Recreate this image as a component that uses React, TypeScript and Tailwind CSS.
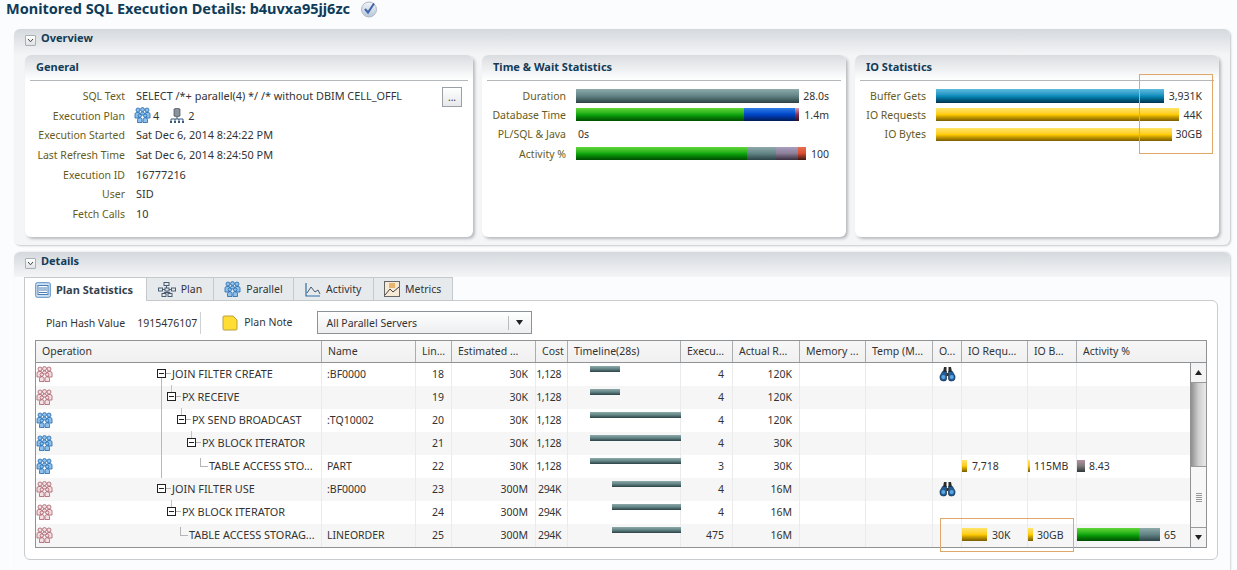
import React from "react";

const barGreen = "bg-gradient-to-b from-[#5fd83a] via-[#0fa80f] to-[#004d00]";
const barSlate = "bg-gradient-to-b from-[#8fabab] via-[#628384] to-[#2c4347]";
const barBlue = "bg-gradient-to-b from-[#2f7de8] via-[#0045c8] to-[#001a55]";
const barGold = "bg-gradient-to-b from-[#ffe566] via-[#ffcc00] to-[#7a5c00]";
const barSky = "bg-gradient-to-b from-[#5dbde0] via-[#0a8dbd] to-[#00334f]";

function People({ c, d }: { c: string; d: string }) {
  return (
    <svg width="17" height="17" viewBox="0 0 17 17" className="shrink-0">
      <g fill={c} stroke={d} strokeWidth="0.8">
        <circle cx="4" cy="3" r="2" />
        <circle cx="8.5" cy="2.6" r="2" />
        <circle cx="13" cy="3" r="2" />
        <path d="M1 11 V7 Q1 5.5 3 5.5 H5 Q6 5.5 6 7 V11 Z" />
        <path d="M11 11 V7 Q11 5.5 12 5.5 H14 Q16 5.5 16 7 V11 Z" />
        <path d="M6.5 8 V6.5 Q6.5 5 8.5 5 Q10.5 5 10.5 6.5 V8 Z" />
        <circle cx="5.8" cy="8.6" r="1.7" />
        <circle cx="11.2" cy="8.6" r="1.7" />
        <path d="M3.5 15.5 V12.5 Q3.5 10.8 5.5 10.8 H6.5 Q8 10.8 8 12.5 V15.5 Z" />
        <path d="M9 15.5 V12.5 Q9 10.8 10.5 10.8 H11.5 Q13.5 10.8 13.5 12.5 V15.5 Z" />
      </g>
    </svg>
  );
}
const BluePeople = () => <People c="#8fc0ec" d="#1f68ad" />;
const PinkPeople = () => <People c="#f3dfe1" d="#a85c68" />;

function Binoculars() {
  return (
    <svg width="17" height="16" viewBox="0 0 17 16">
      <path d="M5 1 H7.5 V6 H9.5 V1 H12 L13 6 H4 Z" fill="#2b2b2b" />
      <path d="M1 10 L3.5 5.5 H7.5 V13 Q7.5 15 4.5 15 Q1 15 1 12 Z" fill="#1d5f9e" stroke="#123" strokeWidth="0.6" />
      <path d="M16 10 L13.5 5.5 H9.5 V13 Q9.5 15 12.5 15 Q16 15 16 12 Z" fill="#1d5f9e" stroke="#123" strokeWidth="0.6" />
      <circle cx="4.3" cy="11" r="2" fill="#5ea6e0" />
      <circle cx="12.7" cy="11" r="2" fill="#5ea6e0" />
      <rect x="7.5" y="7" width="2" height="3" fill="#333" />
    </svg>
  );
}

function Toggle() {
  return (
    <span className="flex h-[11px] w-[11px] items-center justify-center border border-[#aab0b5] bg-gradient-to-b from-white to-[#dfe2e5] rounded-[1px]">
      <svg width="7" height="5" viewBox="0 0 7 5"><path d="M1 1 L3.5 3.8 L6 1" fill="none" stroke="#444" strokeWidth="1" /></svg>
    </span>
  );
}

function Minus({ stub }: { stub?: boolean }) {
  return (
    <span className="relative z-10 flex h-[9px] w-[9px] shrink-0 items-center justify-center border border-[#222] bg-white">
      <span className="h-px w-[5px] bg-[#222]" />
      {stub && <span className="absolute -top-[8px] left-[3px] h-[7px] w-px bg-[#c4c4c4]" />}
    </span>
  );
}

function Card({ title, width, children }: { title: string; width: string; children: React.ReactNode }) {
  return (
    <section className={`${width} h-[182px] shrink-0 rounded-[6px] bg-white shadow-[2px_2px_3px_#b9bcbf]`}>
      <div className="h-[25px] rounded-t-[6px] bg-gradient-to-b from-[#d9dce0] to-white pl-[11px] pt-[5px] text-[11px] font-bold leading-[14px] text-[#123c58]">
        {title}
      </div>
      <div className="mx-[5px] h-px bg-[#b4b8ba]" />
      {children}
    </section>
  );
}

const general: [string, React.ReactNode][] = [
  ["SQL Text", "SELECT /*+ parallel(4) */ /* without DBIM CELL_OFFL"],
  ["Execution Plan", (
    <span className="flex items-center">
      <span className="-ml-[2px] mr-[2px]"><BluePeople /></span>4
      <svg width="16" height="15" viewBox="0 0 16 15" className="ml-[10px] mr-[3px]">
        <path d="M5 1 Q8 -0.5 11 1 V8 Q8 9.5 5 8 Z" fill="#8a939c" stroke="#3f4a55" strokeWidth="0.7" />
        <path d="M8 9 V11 M2 13 V11 H14 V13 M6 11 V13 M10 11 V13" stroke="#3a5a7a" fill="none" />
        <path d="M1 13h2v2H1z M5 13h2v2H5z M9 13h2v2H9z M13 13h2v2h-2z" fill="#3a5a7a" />
      </svg>
      2
    </span>
  )],
  ["Execution Started", "Sat Dec 6, 2014 8:24:22 PM"],
  ["Last Refresh Time", "Sat Dec 6, 2014 8:24:50 PM"],
  ["Execution ID", "16777216"],
  ["User", "SID"],
  ["Fetch Calls", "10"],
];

function StatRow({ label, labelW, children, value, valueW, numW }: { label: string; labelW: string; children?: React.ReactNode; value: string; valueW: string; numW: string }) {
  return (
    <div className="flex h-[19.3px] items-center">
      <span className={`${labelW} shrink-0 pr-[10px] text-right text-[#665c22]`}>{label}</span>
      <div className={`${valueW} flex h-[13px] shrink-0 items-center`}>{children}</div>
      <span className={`${numW} flex shrink-0 justify-end whitespace-nowrap text-[#333]`}>{value}</span>
    </div>
  );
}

type Row = {
  pink?: boolean; indent: string; node?: boolean; stub?: boolean; op: string; name?: string; line: string; est: string; cost: string;
  bar: string; exec: string; rows: string; bino?: boolean; ioReq?: React.ReactNode; ioB?: React.ReactNode; act?: React.ReactNode;
};

const rows: Row[] = [
  { pink: true, indent: "pl-[121px]", node: true, op: "JOIN FILTER CREATE", name: ":BF0000", line: "18", est: "30K", cost: "1,128", bar: "ml-[22px] w-[30px]", exec: "4", rows: "120K", bino: true },
  { pink: true, indent: "pl-[131px]", node: true, stub: true, op: "PX RECEIVE", line: "19", est: "30K", cost: "1,128", bar: "ml-[22px] w-[30px]", exec: "4", rows: "120K" },
  { indent: "pl-[141px]", node: true, stub: true, op: "PX SEND BROADCAST", name: ":TQ10002", line: "20", est: "30K", cost: "1,128", bar: "ml-[22px] w-[91px]", exec: "4", rows: "120K" },
  { indent: "pl-[151px]", node: true, stub: true, op: "PX BLOCK ITERATOR", line: "21", est: "30K", cost: "1,128", bar: "ml-[22px] w-[91px]", exec: "4", rows: "30K" },
  {
    indent: "pl-[164px]", op: "TABLE ACCESS STO...", name: "PART", line: "22", est: "30K", cost: "1,128", bar: "ml-[22px] w-[91px]", exec: "3", rows: "30K",
    ioReq: <><span className={`h-[12px] w-[5px] ${barGold}`} /><span className="ml-[5px]">7,718</span></>,
    ioB: <><span className={`h-[12px] w-[2px] ${barGold}`} /><span className="ml-[4px]">115MB</span></>,
    act: <><span className="h-[12px] w-[8px] bg-gradient-to-b from-[#b78fa0] via-[#7d7a7c] to-[#30383a]" /><span className="ml-[4px]">8.43</span></>,
  },
  { pink: true, indent: "pl-[121px]", node: true, op: "JOIN FILTER USE", name: ":BF0000", line: "23", est: "300M", cost: "294K", bar: "ml-[44px] w-[69px]", exec: "4", rows: "16M", bino: true },
  { pink: true, indent: "pl-[131px]", node: true, stub: true, op: "PX BLOCK ITERATOR", line: "24", est: "300M", cost: "294K", bar: "ml-[44px] w-[69px]", exec: "4", rows: "16M" },
  {
    pink: true, indent: "pl-[144px]", op: "TABLE ACCESS STORAG...", name: "LINEORDER", line: "25", est: "300M", cost: "294K", bar: "ml-[44px] w-[69px]", exec: "475", rows: "16M",
    ioReq: <><span className={`h-[13px] w-[25px] ${barGold}`} /><span className="ml-[5px]">30K</span></>,
    ioB: <><span className={`h-[13px] w-[5px] ${barGold}`} /><span className="ml-[4px]">30GB</span></>,
    act: <><span className={`h-[13px] w-[62px] ${barGreen}`} /><span className={`h-[13px] w-[21px] ${barSlate}`} /><span className="ml-[4px]">65</span></>,
  },
];

const headers = ["Operation", "Name", "Lin...", "Estimated ...", "Cost", "Timeline(28s)", "Execu...", "Actual R...", "Memory ...", "Temp (M...", "O...", "IO Requ...", "IO B..."];

const cellLine = "border-r border-[#ebebeb] pb-[2px]";

export default function App() {
  return (
    <div className="relative h-[570px] w-[1237px] overflow-hidden bg-[#fbfcfd] text-[10.5px] leading-[14px] text-[#333] font-['Noto_Sans',sans-serif]">
      {/* Title */}
      <header className="flex h-[29px] items-start pl-[6px]">
        <h1 className="text-[14.5px] font-bold leading-[17px] text-[#0e3b58]">Monitored SQL Execution Details: b4uvxa95jj6zc</h1>
        <svg width="18" height="18" viewBox="0 0 18 18" className="ml-[10px]">
          <defs>
            <linearGradient id="chk" x1="0" y1="0" x2="0" y2="1">
              <stop offset="0" stopColor="#f2f5f9" />
              <stop offset="1" stopColor="#b9c6d8" />
            </linearGradient>
          </defs>
          <circle cx="9" cy="9.5" r="7.5" fill="url(#chk)" stroke="#aeb8c4" />
          <path d="M5 9 L8 12.5 L14 3.5" fill="none" stroke="#3b66a8" strokeWidth="2" />
        </svg>
      </header>

      {/* Overview */}
      <section className="ml-[14px] h-[216px] w-[1216px] rounded-[6px] bg-[#f4f5f7] shadow-[1px_1px_2px_#c5c8cb]">
        <div className="flex h-[26px] items-start rounded-t-[6px] bg-gradient-to-b from-[#d5d9dd] to-[#f4f5f7] pl-[11px] pt-[2px]">
          <span className="mt-[4px]"><Toggle /></span>
          <span className="ml-[5px] text-[11px] font-bold leading-[14px] text-[#123c58]">Overview</span>
        </div>
        <div className="flex pl-[11px] gap-[9px]">
          <Card title="General" width="w-[448px]">
            <div className="relative pt-[5px]">
              {general.map(([k, v]) => (
                <div key={k} className="flex h-[19.7px] items-center">
                  <span className="w-[100px] shrink-0 text-right text-[#665c22]">{k}</span>
                  <span className="ml-[11px] whitespace-nowrap text-[10.9px]">{v}</span>
                </div>
              ))}
              <button className="absolute right-[11px] top-[6px] flex h-[20px] w-[20px] items-center justify-center border border-[#9aa0a5] bg-gradient-to-b from-white to-[#e6e8ea] text-[10px] leading-[10px]">...</button>
            </div>
          </Card>
          <Card title="Time & Wait Statistics" width="w-[364px]">
            <div className="pt-[5px]">
              <StatRow label="Duration" labelW="w-[94px]" valueW="w-[223px]" numW="w-[30px]" value="28.0s">
                <span className={`h-[14px] w-[223px] ${barSlate}`} />
              </StatRow>
              <StatRow label="Database Time" labelW="w-[94px]" valueW="w-[223px]" numW="w-[30px]" value="1.4m">
                <span className={`h-[13px] w-[170px] ${barGreen}`} />
                <span className={`h-[13px] w-[51px] ${barBlue}`} />
                <span className="h-[13px] w-[4px] shrink-0 bg-gradient-to-b from-[#d8a0b8] via-[#8a3050] to-[#301020]" />
              </StatRow>
              <div className="flex h-[19.3px] items-center">
                <span className="w-[94px] shrink-0 pr-[10px] text-right text-[#665c22]">PL/SQL &amp; Java</span>
                <span className="ml-[2px]">0s</span>
              </div>
              <StatRow label="Activity %" labelW="w-[94px]" valueW="w-[223px]" numW="w-[30px]" value="100">
                <span className={`h-[13px] w-[171px] shrink-0 ${barGreen}`} />
                <span className={`h-[13px] w-[29px] shrink-0 ${barSlate}`} />
                <span className="h-[13px] w-[22px] shrink-0 bg-gradient-to-b from-[#a8a0c0] via-[#8a7d96] to-[#3a3040]" />
                <span className="h-[13px] w-[8px] shrink-0 bg-gradient-to-b from-[#e87050] via-[#d84a30] to-[#401810]" />
              </StatRow>
            </div>
          </Card>
          <Card title="IO Statistics" width="w-[364px]">
            <div className="pt-[5px]">
              <StatRow label="Buffer Gets" labelW="w-[81px]" valueW="w-[243px]" numW="w-[23px]" value="3,931K">
                <span className={`h-[14px] w-[228px] ${barSky}`} />
              </StatRow>
              <StatRow label="IO Requests" labelW="w-[81px]" valueW="w-[243px]" numW="w-[23px]" value="44K">
                <span className={`h-[13px] w-[243px] ${barGold}`} />
              </StatRow>
              <StatRow label="IO Bytes" labelW="w-[81px]" valueW="w-[243px]" numW="w-[23px]" value="30GB">
                <span className={`h-[13px] w-[236px] ${barGold}`} />
              </StatRow>
            </div>
          </Card>
        </div>
      </section>

      {/* Details */}
      <section className="ml-[14px] mt-[7px] h-[318px] w-[1216px] rounded-t-[6px] bg-[#fbfcfd] shadow-[1px_0_2px_#d0d3d6]">
        <div className="flex h-[25px] items-start rounded-t-[6px] bg-gradient-to-b from-[#d5d9dd] to-[#f4f5f7] pl-[11px] pt-[2px]">
          <span className="mt-[4px]"><Toggle /></span>
          <span className="ml-[5px] text-[11px] font-bold leading-[14px] text-[#123c58]">Details</span>
        </div>

        <div className="ml-[10px] w-[1194px]">
          {/* Tabs */}
          <div className="relative z-10 flex h-[24px] items-stretch">
            <div className="flex w-[123px] items-center border border-b-0 border-[#c5c9cc] bg-white pl-[10px] text-[11px] text-[#33424c] font-bold">
              <svg width="16" height="16" viewBox="0 0 16 16" className="mr-[5px]">
                <rect x="0.7" y="0.7" width="14.6" height="14.6" rx="1.5" fill="#cfe2f4" stroke="#5c8fc0" />
                <rect x="3" y="3.5" width="10" height="9" fill="#fff" stroke="#4a7fb5" />
                <path d="M4 6h8M4 8h8M4 10.5h8" stroke="#4a7fb5" />
              </svg>
              Plan Statistics
            </div>
            <div className="flex w-[67px] items-center justify-center gap-[5px] border-t border-r border-b border-[#c5c9cc] bg-[#e7eaed]">
              <svg width="18" height="15" viewBox="0 0 18 15" fill="none" stroke="#4a5d70">
                <rect x="6" y="0.5" width="5" height="3" /><rect x="0.5" y="6" width="4" height="3" /><rect x="7" y="6" width="4" height="3" /><rect x="13.5" y="6" width="4" height="3" /><rect x="4" y="11.5" width="4" height="3" /><rect x="10" y="11.5" width="4" height="3" />
                <path d="M8.5 3.5V6M4.5 7.5H7M11 7.5h2.5M9 9v1.5H6v1M9 10.5h3v1" />
              </svg>
              Plan
            </div>
            <div className="flex w-[80px] items-center justify-center gap-[5px] border-t border-r border-b border-[#c5c9cc] bg-[#e7eaed]">
              <BluePeople />Parallel
            </div>
            <div className="flex w-[80px] items-center pl-[11px] gap-[5px] border-t border-r border-b border-[#c5c9cc] bg-[#e7eaed]">
              <svg width="16" height="15" viewBox="0 0 16 15" fill="none">
                <path d="M1 1V14H15" stroke="#2f6ea8" strokeWidth="1.2" />
                <path d="M2 11L6 5L10 10L13 8L15 12" stroke="#46596a" />
              </svg>
              Activity
            </div>
            <div className="flex w-[79px] items-center pl-[10px] gap-[5px] border-t border-r border-b border-[#c5c9cc] bg-[#e7eaed]">
              <svg width="16" height="16" viewBox="0 0 16 16">
                <rect x="0.5" y="0.5" width="15" height="15" fill="#f6ead6" stroke="#666" />
                <rect x="5" y="2" width="6" height="5" fill="#e8b36a" />
                <path d="M1 14L6 8L9 11L15 6" fill="none" stroke="#444" />
              </svg>
              Metrics
            </div>
          </div>

          {/* Content box */}
          <div className="-mt-px h-[260px] rounded-b-[6px] rounded-tr-[6px] border border-[#c8cccf] bg-white pl-[10px] pr-[10px]">
            <div className="flex h-[39px] items-center pl-[11px] pt-[4px]">
              <span>Plan Hash Value</span>
              <span className="ml-[12px]">1915476107</span>
              <span className="ml-[3px] h-[22px] w-px bg-[#cfd2d4]" />
              <svg width="16" height="16" viewBox="0 0 16 16" className="ml-[21px]">
                <path d="M1 2 Q1 1 2 1 H11 L15 5 V14 Q15 15 14 15 H2 Q1 15 1 14 Z" fill="#ffdd33" stroke="#b8a040" />
              </svg>
              <span className="ml-[6px] -mt-[2px]">Plan Note</span>
              <div className="ml-[25px] flex h-[23px] w-[215px] items-center justify-between border border-[#8d9296] bg-gradient-to-b from-white to-[#eceef0] pl-[8px] pr-[8px]">
                <span>All Parallel Servers</span>
                <span className="flex h-[14px] items-center border-l border-[#bbb] pl-[7px]">
                  <svg width="7" height="5" viewBox="0 0 7 5"><path d="M0 0H7L3.5 5Z" fill="#222" /></svg>
                </span>
              </div>
            </div>

            {/* Table */}
            <div className="h-[208px] w-[1172px] border border-[#8f9396]">
              <div className="grid h-[22px] grid-cols-[286px_94px_36px_84px_32px_113px_52px_67px_66px_67px_29px_66px_49px_130px] border-b border-[#8f9396] bg-gradient-to-b from-[#f7f7f7] to-[#f0f0f0]">
                {headers.map((h) => (
                  <div key={h} className="flex items-center overflow-hidden whitespace-nowrap border-r border-[#a9adb0] pb-[1px] pl-[6px]">{h}</div>
                ))}
                <div className="flex items-center pb-[1px] pl-[6px]">Activity %</div>
              </div>
              <div className="flex">
                <div className="w-[1154px]">
                  {rows.map((r, i) => (
                    <div key={r.line} className={`grid h-[23px] grid-cols-[286px_94px_36px_84px_32px_113px_52px_67px_66px_67px_29px_66px_49px_114px] ${i % 2 ? "bg-[#f6f6f6]" : "bg-white"}`}>
                      <div className={`relative flex items-center ${cellLine}`}>
                        <span className="mt-[2px]">{r.pink ? <PinkPeople /> : <BluePeople />}</span>
                        <div className={`absolute left-0 top-0 flex h-[21px] items-center ${r.indent}`}>
                          {r.node ? <Minus stub={r.stub} /> : <span className="relative -top-[3px] h-[9px] w-[8px] border-b border-l border-[#b5b5b5]" />}
                          {r.node && <span className="h-px w-[5px] bg-[#b5b5b5]" />}
                          <span className="ml-[1px] whitespace-nowrap text-[10.9px]">{r.op}</span>
                        </div>
                        {i === 0 && <span className="absolute left-[125px] top-[15px] h-[100px] w-px bg-[#b9b9b9]" />}
                      </div>
                      <div className={`flex items-center pl-[5px] ${cellLine}`}>{r.name}</div>
                      <div className={`flex items-center justify-end pr-[7px] ${cellLine}`}>{r.line}</div>
                      <div className={`flex items-center justify-end pr-[7px] ${cellLine}`}>{r.est}</div>
                      <div className={`flex items-center justify-end pr-[6px] ${cellLine} whitespace-nowrap tracking-[-0.4px]`}>{r.cost}</div>
                      <div className={cellLine}><div className={`mt-[3px] h-[6px] ${r.bar} ${barSlate}`} /></div>
                      <div className={`flex items-center justify-end pr-[8px] ${cellLine}`}>{r.exec}</div>
                      <div className={`flex items-center justify-end pr-[7px] ${cellLine}`}>{r.rows}</div>
                      <div className={cellLine} />
                      <div className={cellLine} />
                      <div className={`flex items-center pl-[6px] ${cellLine}`}>{r.bino && <Binoculars />}</div>
                      <div className={`flex items-center whitespace-nowrap ${cellLine}`}>{r.ioReq}</div>
                      <div className={`flex items-center whitespace-nowrap ${cellLine}`}>{r.ioB}</div>
                      <div className="flex items-center whitespace-nowrap pb-[2px]">{r.act}</div>
                    </div>
                  ))}
                </div>
                {/* Scrollbar */}
                <div className="flex h-[184px] w-[16px] flex-col border-l border-[#8f9396] bg-gradient-to-r from-[#8f8f8f] via-[#cfcfcf] to-[#e9e9e9]">
                  <div className="flex h-[20px] items-center justify-center border-b border-[#9a9a9a] bg-[#f4f4f4]">
                    <svg width="7" height="5" viewBox="0 0 7 5"><path d="M0 5H7L3.5 0Z" fill="#222" /></svg>
                  </div>
                  <div className="mt-auto flex h-[62px] items-center justify-center border-y border-[#9a9a9a] bg-[#f7f7f7]">
                    <span className="flex w-[6px] flex-col gap-px">
                      <i className="h-px bg-[#999]" /><i className="h-px bg-[#999]" /><i className="h-px bg-[#999]" /><i className="h-px bg-[#999]" /><i className="h-px bg-[#999]" />
                    </span>
                  </div>
                  <div className="flex h-[19px] items-center justify-center bg-[#f4f4f4]">
                    <svg width="7" height="5" viewBox="0 0 7 5"><path d="M0 0H7L3.5 5Z" fill="#222" /></svg>
                  </div>
                </div>
              </div>
            </div>
          </div>
        </div>
      </section>

      {/* Highlight annotations */}
      <div className="absolute left-[1139px] top-[74px] h-[80px] w-[74px] border border-[#e0a868]" />
      <div className="absolute left-[940px] top-[518px] h-[34px] w-[134px] border border-[#e0a868]" />
    </div>
  );
}
